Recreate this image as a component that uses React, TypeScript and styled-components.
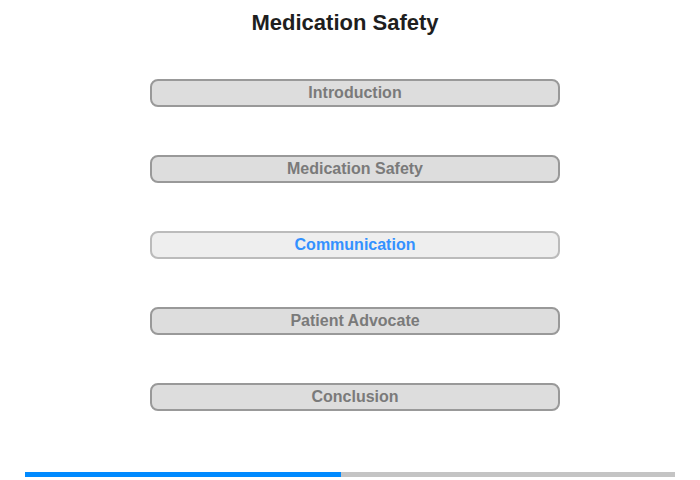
import React from 'react'
import styled, { createGlobalStyle } from 'styled-components'

const GlobalStyle = createGlobalStyle`
  html, body {
    margin: 0;
    padding: 0;
    background: #fff;
    font-family: "Liberation Sans", Arial, sans-serif;
  }
`

const SECTIONS = [
  { key: 'intro', text: 'Introduction' },
  { key: 'safety', text: 'Medication Safety' },
  { key: 'comm', text: 'Communication', active: true },
  { key: 'advocate', text: 'Patient Advocate' },
  { key: 'end', text: 'Conclusion' },
]

export default function App() {
  const progress = 316 / 650
  return (
    <Root>
      <GlobalStyle />
      <Title>Medication Safety</Title>
      <Menu>
        {SECTIONS.map((s) => (
          <MenuButton key={s.key} $active={!!s.active}>
            {s.text}
          </MenuButton>
        ))}
      </Menu>
      <Progress>
        <ProgressFill style={{ width: `${progress * 100}%` }} />
      </Progress>
    </Root>
  )
}

const Root = styled.div`
  width: 700px;
  height: 480px;
  display: flex;
  flex-direction: column;
  box-sizing: border-box;
  padding-top: 10px;
`

const Title = styled.h1`
  margin: 0;
  padding-right: 10px;
  font-size: 22px;
  line-height: 26px;
  font-weight: bold;
  color: #1e1e1e;
  text-align: center;
`

const Menu = styled.div`
  display: flex;
  flex-direction: column;
  gap: 48px;
  margin-top: 43px;
  padding-left: 150px;
`

const MenuButton = styled.div<{ $active: boolean }>`
  width: 410px;
  height: 28px;
  box-sizing: border-box;
  border: 2px solid ${(p) => (p.$active ? '#bbbbbb' : '#999999')};
  border-radius: 8px;
  background: ${(p) => (p.$active ? '#eeeeee' : '#dddddd')};
  color: ${(p) => (p.$active ? '#3391ff' : '#7a7a7a')};
  font-size: 16px;
  font-weight: bold;
  line-height: 24px;
  text-align: center;
  cursor: pointer;
`

const Progress = styled.div`
  margin: 61px 25px 0;
  height: 5px;
  background: #c4c4c4;
`

const ProgressFill = styled.div`
  height: 100%;
  background: #008aff;
`
